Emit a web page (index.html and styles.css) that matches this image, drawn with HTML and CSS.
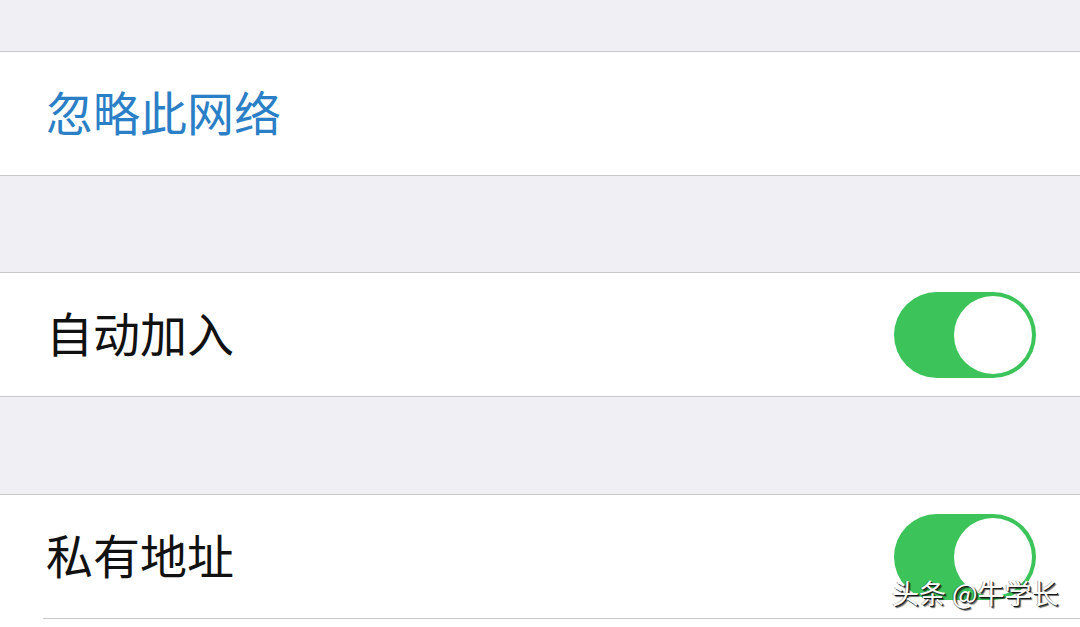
FILE: index.html
```html
<!DOCTYPE html>
<html lang="zh-CN">
<head>
<meta charset="utf-8">
<title>无线局域网</title>
<link rel="stylesheet" href="styles.css">
</head>
<body>
<div class="page">
  <div class="gap gap-top"></div>
  <section class="group">
    <div class="cell">
      <span class="label action">忽略此网络</span>
    </div>
  </section>
  <div class="gap"></div>
  <section class="group">
    <div class="cell">
      <span class="label">自动加入</span>
      <span class="switch on"><span class="knob"></span></span>
    </div>
  </section>
  <div class="gap gap-last"></div>
  <section class="group group-open">
    <div class="cell cell-inset">
      <span class="label">私有地址</span>
      <span class="switch on"><span class="knob"></span></span>
    </div>
    <div class="cell cell-next"></div>
  </section>
  <div class="watermark">头条 @牛学长</div>
</div>
</body>
</html>
```

FILE: styles.css
```css
html, body {
  margin: 0;
  padding: 0;
}

body {
  background: #efeff4;
  font-family: "Noto Sans CJK SC", "Noto Sans", sans-serif;
  width: 1080px;
  height: 627px;
  overflow: hidden;
}

.page {
  position: relative;
  width: 1080px;
  height: 627px;
  display: flex;
  flex-direction: column;
}

.gap {
  height: 96px;
  flex: none;
}

.gap-top {
  height: 51px;
}

.gap-last {
  height: 97px;
}

.group {
  background: #ffffff;
  border-top: 1px solid #c8c7cc;
  border-bottom: 1px solid #c8c7cc;
  flex: none;
}

.group-open {
  border-bottom: none;
  flex: 1;
}

.cell {
  height: 123px;
  display: flex;
  align-items: center;
  justify-content: space-between;
  padding: 0 44px 0 46px;
  box-sizing: border-box;
}

.cell-inset {
  position: relative;
}

.cell-inset::after {
  content: "";
  position: absolute;
  left: 43px;
  right: 0;
  bottom: -1px;
  height: 1px;
  background: #c8c7cc;
}

.cell-next {
  height: 20px;
  margin-top: 1px;
}

.label {
  font-size: 47px;
  line-height: 1;
  color: #111111;
  margin-bottom: 6px;
}

.label.action {
  color: #2b7fc6;
}

.switch {
  width: 142px;
  height: 86px;
  border-radius: 43px;
  background: #3cc45b;
  box-sizing: border-box;
  padding: 4px;
  display: flex;
  justify-content: flex-end;
  align-items: center;
}

.knob {
  width: 78px;
  height: 78px;
  border-radius: 50%;
  background: #ffffff;
}

.watermark {
  position: absolute;
  left: 892px;
  top: 577px;
  font-size: 27px;
  line-height: 32px;
  color: #ffffff;
  white-space: nowrap;
  text-shadow: 1px 1px 0 #1a1a1a, 2px 2px 1px rgba(0, 0, 0, 0.6), -1px 0 0 rgba(0, 0, 0, 0.35);
}
```
